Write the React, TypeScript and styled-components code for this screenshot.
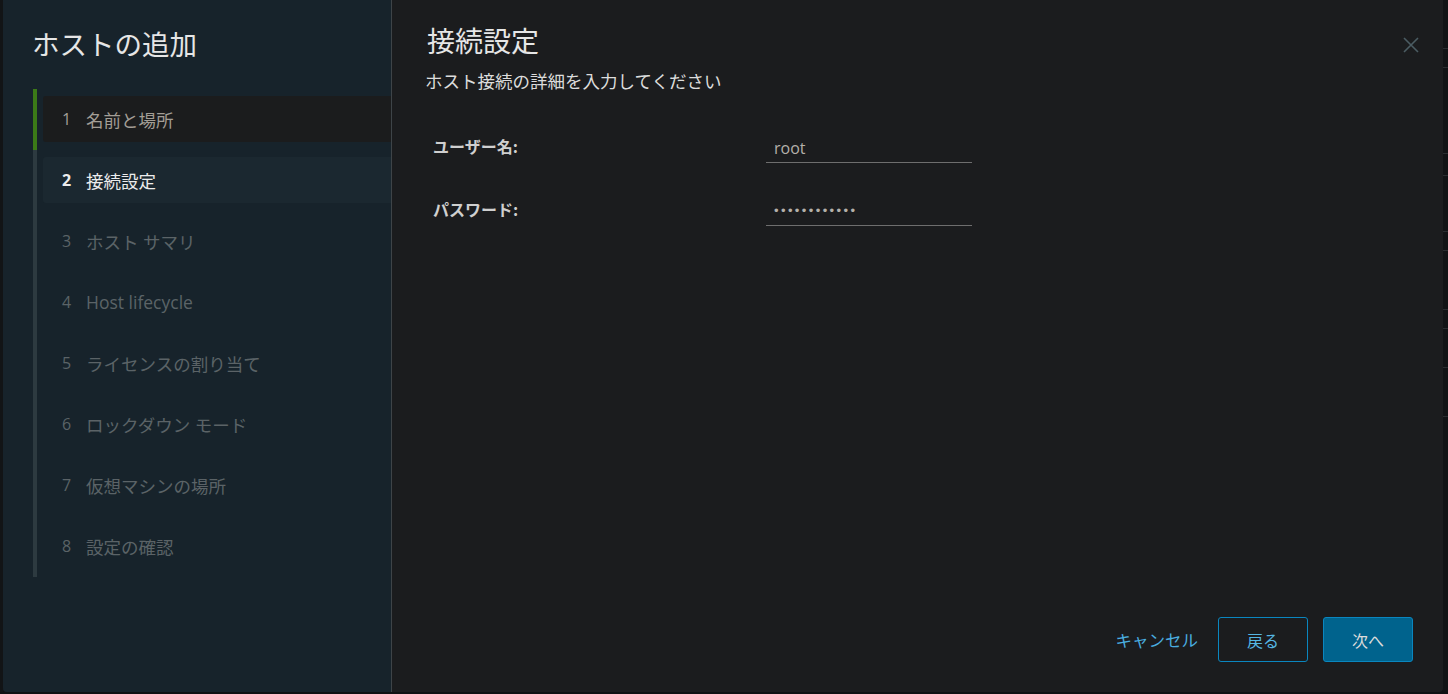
import React from 'react';
import styled, { createGlobalStyle } from 'styled-components';

const GlobalStyle = createGlobalStyle`
  html, body {
    margin: 0;
    padding: 0;
    background: #0f1113;
    overflow: hidden;
  }
  body {
    font-family: 'Open Sans', 'Noto Sans CJK JP', sans-serif;
  }
`;

type StepState = 'done' | 'current' | 'todo';

const steps: [string, StepState][] = [
  ['名前と場所', 'done'],
  ['接続設定', 'current'],
  ['ホスト サマリ', 'todo'],
  ['Host lifecycle', 'todo'],
  ['ライセンスの割り当て', 'todo'],
  ['ロックダウン モード', 'todo'],
  ['仮想マシンの場所', 'todo'],
  ['設定の確認', 'todo']
];

const behindRows = [48, 18, 85, 21, 55, 18, 58, 18, 38, 48];

const App = () => {
  return (
    <>
      <GlobalStyle />
      <Backdrop>
        <LeftStrip />
        <Modal>
          <Sidebar>
            <WizardTitle>ホストの追加</WizardTitle>
            <StepList>
              {steps.map(([label, state], i) => (
                <StepSlot key={label} $state={state}>
                  <StepBox $state={state}>
                    <StepNum $state={state}>{i + 1}</StepNum>
                    <span>{label}</span>
                  </StepBox>
                </StepSlot>
              ))}
            </StepList>
          </Sidebar>
          <Main>
            <Header>
              <div>
                <PageTitle>接続設定</PageTitle>
                <Subtitle>ホスト接続の詳細を入力してください</Subtitle>
              </div>
              <CloseButton aria-label="close">
                <svg width="18" height="18" viewBox="0 0 18 18">
                  <path
                    d="M2 2L16 16M16 2L2 16"
                    stroke="#4b5c63"
                    strokeWidth="1.6"
                    fill="none"
                  />
                </svg>
              </CloseButton>
            </Header>
            <Form>
              <FieldLabel>ユーザー名:</FieldLabel>
              <FieldInput defaultValue="root" />
              <FieldLabel>パスワード:</FieldLabel>
              <FieldInput $secret type="password" defaultValue="************" />
            </Form>
            <Footer>
              <LinkButton>キャンセル</LinkButton>
              <Button $primary={false}>戻る</Button>
              <Button $primary>次へ</Button>
            </Footer>
          </Main>
        </Modal>
        <RightStrip>
          {behindRows.map((h, i) => (
            <BehindRow key={i} style={{ height: h }} />
          ))}
        </RightStrip>
      </Backdrop>
    </>
  );
};

const Backdrop = styled.div`
  display: flex;
  width: 1448px;
  height: 694px;
  padding-bottom: 2px;
  box-sizing: border-box;
  background: #0f1113;
`;

const LeftStrip = styled.div`
  width: 3px;
  background: #121416;
`;

const RightStrip = styled.div`
  width: 5px;
  display: flex;
  flex-direction: column;
  background: #111315;
`;

const BehindRow = styled.div`
  border-bottom: 1px solid #2a2d30;
`;

const Modal = styled.div`
  width: 1440px;
  display: grid;
  grid-template-columns: 389px 1fr;
  background: #1b1c1e;
  border-radius: 0 0 4px 4px;
  overflow: hidden;
`;

const Sidebar = styled.div`
  background: #17232b;
  border-right: 1px solid #3e4448;
  padding: 24px 0 0 30px;
`;

const WizardTitle = styled.h1`
  margin: 0 0 0 -1px;
  font-family: 'Noto Sans CJK JP', sans-serif;
  font-weight: 400;
  font-size: 27.5px;
  line-height: 38px;
  color: #e6e6e6;
`;

const StepList = styled.div`
  margin-top: 27px;
  display: flex;
  flex-direction: column;
`;

const StepSlot = styled.div<{ $state: StepState }>`
  height: 61px;
  box-sizing: border-box;
  padding: 7px 0 0 6px;
  border-left: 4px solid
    ${p => (p.$state === 'done' ? '#3b7a17' : '#2d3a40')};
`;

const StepBox = styled.div<{ $state: StepState }>`
  height: 46px;
  display: flex;
  align-items: center;
  padding-left: 19px;
  border-radius: 3px 0 0 3px;
  font-size: 17.5px;
  background: ${p =>
    p.$state === 'done'
      ? '#1b1c1d'
      : p.$state === 'current'
      ? '#1b2830'
      : 'transparent'};
  color: ${p =>
    p.$state === 'done'
      ? '#a39e96'
      : p.$state === 'current'
      ? '#ececec'
      : '#5b6367'};
`;

const StepNum = styled.span<{ $state: StepState }>`
  width: 24px;
  font-size: 16px;
  font-weight: ${p => (p.$state === 'current' ? 700 : 400)};
`;

const Main = styled.div`
  display: flex;
  flex-direction: column;
  padding: 20px 30px 30px 35px;
`;

const Header = styled.div`
  display: flex;
  justify-content: space-between;
  align-items: flex-start;
`;

const PageTitle = styled.h2`
  margin: 0;
  font-family: 'Noto Sans CJK JP', sans-serif;
  font-weight: 400;
  font-size: 28px;
  line-height: 40px;
  color: #e6e6e6;
`;

const Subtitle = styled.p`
  margin: 8px 0 0 -2px;
  font-family: 'Noto Sans CJK JP', sans-serif;
  font-size: 17.5px;
  line-height: 26px;
  color: #dcdcdc;
`;

const CloseButton = styled.button`
  margin: 13px -10px 0 0;
  width: 24px;
  height: 24px;
  padding: 0;
  border: none;
  background: transparent;
  display: flex;
  align-items: center;
  justify-content: center;
`;

const Form = styled.div`
  margin-top: 39px;
  padding-left: 6px;
  display: grid;
  grid-template-columns: 333px 206px;
  grid-auto-rows: 30px;
  row-gap: 33px;
  align-items: end;
`;

const FieldLabel = styled.label`
  font-family: 'Noto Sans CJK JP', sans-serif;
  font-size: 16px;
  font-weight: 700;
  color: #cfcfcf;
  align-self: center;
  margin-top: -4px;
`;

const FieldInput = styled.input<{ $secret?: boolean }>`
  box-sizing: border-box;
  width: 206px;
  height: 30px;
  padding: 0 8px;
  border: none;
  border-bottom: 1px solid #6e6e6e;
  background: transparent;
  font-family: ${p => (p.$secret ? "'Liberation Sans'" : "'Open Sans'")},
    sans-serif;
  font-size: ${p => (p.$secret ? '13px' : '16px')};
  letter-spacing: ${p => (p.$secret ? '2.4px' : '0')};
  color: #b4b0aa;
  outline: none;
`;

const Footer = styled.div`
  margin-top: auto;
  display: flex;
  justify-content: flex-end;
  align-items: center;
`;

const LinkButton = styled.button`
  border: none;
  background: transparent;
  padding: 0;
  margin-right: 20px;
  font-family: 'Noto Sans CJK JP', sans-serif;
  font-size: 16.5px;
  color: #4aaee0;
`;

const Button = styled.button<{ $primary: boolean }>`
  width: 90px;
  height: 45px;
  margin-left: ${p => (p.$primary ? '15px' : '0')};
  border-radius: 3px;
  border: 1px solid #0a86bf;
  background: ${p => (p.$primary ? '#00638d' : 'transparent')};
  color: ${p => (p.$primary ? '#dcdcdc' : '#55b6e3')};
  font-family: 'Noto Sans CJK JP', sans-serif;
  font-size: 16px;
`;

export default App;
